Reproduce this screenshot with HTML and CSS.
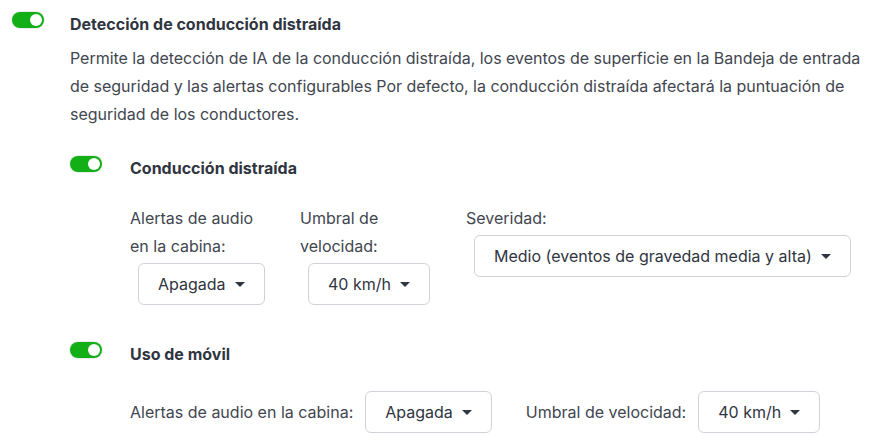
FILE: index.html
```html
<!DOCTYPE html>
<html>
<head>
  <title>Detección de conducción distraída</title>
  <link rel="stylesheet" href="styles.css">
</head>
<body>
  <div class="setting">
    <span class="toggle on"></span>
    <div class="setting-body">
      <div class="title">Detección de conducción distraída</div>
      <p class="desc">
        Permite la detección de IA de la conducción distraída, los eventos de superficie en la Bandeja de entrada de seguridad y las alertas configurables Por defecto, la conducción distraída afectará la puntuación de seguridad de los conductores.
      </p>

      <div class="subsetting">
        <span class="toggle on"></span>
        <div class="setting-body">
          <div class="title">Conducción distraída</div>
          <div class="fields">
            <div class="field col-audio">
              <label>Alertas de audio en la cabina:</label>
              <div class="select">Apagada <span class="caret"></span></div>
            </div>
            <div class="field col-speed">
              <label>Umbral de velocidad:</label>
              <div class="select">40 km/h <span class="caret"></span></div>
            </div>
            <div class="field">
              <label>Severidad:</label>
              <div class="select">Medio (eventos de gravedad media y alta) <span class="caret"></span></div>
            </div>
          </div>
        </div>
      </div>

      <div class="subsetting">
        <span class="toggle on"></span>
        <div class="setting-body">
          <div class="title">Uso de móvil</div>
          <div class="inline-fields">
            <label>Alertas de audio en la cabina:</label>
            <div class="select">Apagada <span class="caret"></span></div>
            <label class="spaced">Umbral de velocidad:</label>
            <div class="select">40 km/h <span class="caret"></span></div>
          </div>
        </div>
      </div>
    </div>
  </div>
</body>
</html>
```

FILE: styles.css
```css
body {
  margin: 0;
  padding: 12px 6px 0 12px;
  font-family: Inter, "Liberation Sans", sans-serif;
  font-size: 16px;
  color: #41464f;
  background: white;
  }
.setting, .subsetting {
  display: flex;
  align-items: flex-start;
  }
.setting-body {
  flex: 1;
  }
.toggle {
  flex: none;
  position: relative;
  width: 32px;
  height: 16px;
  margin-right: 26px;
  border-radius: 8px;
  background: #b9bec6;
  box-shadow: 0 0 0 1px rgba(0, 0, 0, 0.08);
  }
.subsetting .toggle {
  margin-right: 28px;
  }
.toggle.on {
  background: #12b016;
  }
.toggle::after {
  content: "";
  position: absolute;
  top: 2px;
  left: 2px;
  width: 12px;
  height: 12px;
  border-radius: 50%;
  background: white;
  }
.toggle.on::after {
  left: 18px;
  }
.title {
  font-weight: 700;
  line-height: 24px;
  color: #2f3540;
  }
.desc {
  margin: 8px 0 28px 0;
  line-height: 28px;
  letter-spacing: -0.02px;
  }
.subsetting + .subsetting {
  margin-top: 37px;
  }
.fields {
  display: flex;
  gap: 30px;
  margin-top: 24px;
  }
.field label {
  display: block;
  line-height: 28px;
  }
.col-audio {
  width: 140px;
  }
.col-speed {
  width: 136px;
  }
.select {
  display: inline-flex;
  align-items: center;
  height: 42px;
  box-sizing: border-box;
  margin: 3px 0 0 8px;
  padding: 0 19px;
  border: 1px solid #cfd3d9;
  border-radius: 6px;
  color: #2f3540;
  white-space: nowrap;
  }
.caret {
  display: inline-block;
  margin-left: 9px;
  border-left: 5px solid transparent;
  border-right: 5px solid transparent;
  border-top: 5px solid #2f3540;
  }
.inline-fields {
  display: flex;
  align-items: center;
  margin-top: 25px;
  }
.inline-fields .select {
  margin: 0 0 0 12px;
  }
.inline-fields .spaced {
  margin-left: 34px;
  }
```
